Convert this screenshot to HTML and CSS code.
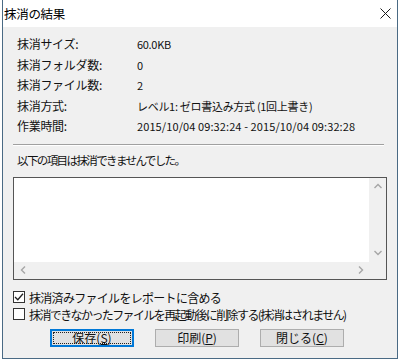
FILE: index.html
```html
<!DOCTYPE html>
<html lang="ja">
<head>
    <meta charset="UTF-8">
    <title>抹消の結果</title>
    <link rel="stylesheet" href="styles.css">
</head>
<body>
    <div class="window">
        <div class="titlebar">
            <span class="title">抹消の結果</span>
            <svg class="close" width="11" height="11" viewBox="0 0 11 11">
                <path d="M0.5 0.5 L10.5 10.5 M10.5 0.5 L0.5 10.5" stroke="#1a1a1a" stroke-width="1" fill="none"/>
            </svg>
        </div>
        <div class="content">
            <div class="info">
                <div class="label">抹消サイズ:</div><div class="value">60.0KB</div>
                <div class="label">抹消フォルダ数:</div><div class="value">0</div>
                <div class="label">抹消ファイル数:</div><div class="value">2</div>
                <div class="label">抹消方式:</div><div class="value">レベル1: ゼロ書込み方式 (1回上書き)</div>
                <div class="label">作業時間:</div><div class="value date">2015/10/04 09:32:24 - 2015/10/04 09:32:28</div>
            </div>
            <div class="separator"></div>
            <div class="message">以下の項目は抹消できませんでした。</div>
            <div class="listbox">
                <div class="list-main">
                    <div class="list-area"></div>
                    <div class="vscroll">
                        <span class="arrow"><svg width="8" height="6" viewBox="0 0 8 6"><path d="M0.5 5 L4 1.5 L7.5 5" stroke="#a6a6a6" stroke-width="1.4" fill="none"/></svg></span>
                        <span class="arrow"><svg width="8" height="6" viewBox="0 0 8 6"><path d="M0.5 1 L4 4.5 L7.5 1" stroke="#a6a6a6" stroke-width="1.4" fill="none"/></svg></span>
                    </div>
                </div>
                <div class="list-bottom">
                    <div class="hscroll">
                        <span class="arrow"><svg width="6" height="8" viewBox="0 0 6 8"><path d="M5 0.5 L1.5 4 L5 7.5" stroke="#a6a6a6" stroke-width="1.4" fill="none"/></svg></span>
                        <span class="arrow"><svg width="6" height="8" viewBox="0 0 6 8"><path d="M1 0.5 L4.5 4 L1 7.5" stroke="#a6a6a6" stroke-width="1.4" fill="none"/></svg></span>
                    </div>
                    <div class="corner"></div>
                </div>
            </div>
            <div class="checks">
                <label class="check">
                    <span class="box">
                        <svg width="10" height="10" viewBox="0 0 10 10"><path d="M1 5 L3.8 7.8 L9 1.8" stroke="#222" stroke-width="1.3" fill="none"/></svg>
                    </span>
                    <span class="check-text">抹消済みファイルをレポートに含める</span>
                </label>
                <label class="check">
                    <span class="box"></span>
                    <span class="check-text long">抹消できなかったファイルを再起動後に削除する(抹消はされません)</span>
                </label>
            </div>
            <div class="buttons">
                <button class="btn default"><span class="focus">保存(<u>S</u>)</span></button>
                <button class="btn">印刷(<u>P</u>)</button>
                <button class="btn">閉じる(<u>C</u>)</button>
            </div>
        </div>
    </div>
</body>
</html>
```

FILE: styles.css
```css
* {
    margin: 0;
    padding: 0;
    box-sizing: border-box;
}
body {
    font-family: "Noto Sans CJK JP", "Liberation Sans", sans-serif;
    font-size: 12px;
    color: #111;
    background-color: #fff;
    width: 400px;
    height: 360px;
    overflow: hidden;
}
.window {
    width: 396px;
    height: 359px;
    margin-left: 2px;
    border: 1px solid #4a6a84;
    border-top: none;
    background-color: #f0f0f0;
}

.titlebar {
    height: 27px;
    background-color: #fff;
    display: flex;
    align-items: center;
    justify-content: space-between;
    padding: 0 6px 0 1px;
}
.title {
    font-size: 12.5px;
    color: #000;
    letter-spacing: -0.3px;
}

.content {
    padding: 7px 0 0 10px;
}
.info {
    display: grid;
    grid-template-columns: 120px 1fr;
    padding-left: 4px;
}
.label, .value {
    height: 20.6px;
    line-height: 20px;
    white-space: nowrap;
    letter-spacing: -0.3px;
}
.value {
    font-size: 11px;
}
.value.date {
    letter-spacing: 0.1px;
}
.separator {
    margin-top: 7px;
    width: 371px;
    border-top: 1px solid #a0a0a0;
    border-bottom: 1px solid #fff;
}
.message {
    height: 31px;
    padding: 4px 0 0 4px;
    line-height: 20px;
    letter-spacing: -1.6px;
    font-size: 11.5px;
}

.listbox {
    width: 374px;
    height: 103px;
    border: 1px solid #555;
    background-color: #fff;
    display: flex;
    flex-direction: column;
}
.list-main {
    flex: 1;
    display: flex;
}
.list-area {
    flex: 1;
}
.vscroll {
    width: 17px;
    background-color: #f0f0f0;
    display: flex;
    flex-direction: column;
    justify-content: space-between;
}
.arrow {
    width: 17px;
    height: 17px;
    display: flex;
    align-items: center;
    justify-content: center;
}
.list-bottom {
    height: 17px;
    display: flex;
}
.hscroll {
    flex: 1;
    background-color: #f0f0f0;
    display: flex;
    justify-content: space-between;
}
.corner {
    width: 17px;
    background-color: #f0f0f0;
}

.checks {
    margin-top: 11px;
    display: flex;
    flex-direction: column;
    gap: 4px;
}
.check {
    display: flex;
    align-items: center;
    gap: 4px;
    height: 13px;
    white-space: nowrap;
}
.box {
    flex-shrink: 0;
    width: 12px;
    height: 12px;
    border: 1px solid #333;
    background-color: #fff;
    display: flex;
    align-items: center;
    justify-content: center;
}
.check-text {
    letter-spacing: -0.7px;
}
.check-text.long {
    letter-spacing: -1.6px;
}

.buttons {
    margin-top: 8px;
    display: flex;
    gap: 21px;
    padding-left: 37px;
}
.btn {
    width: 84px;
    height: 18px;
    border: 1px solid #adadad;
    background-color: #e1e1e1;
    font-family: inherit;
    font-size: 12px;
    color: #111;
    display: flex;
    align-items: center;
    justify-content: center;
}
.btn.default {
    border-color: #0078d7;
    box-shadow: inset 0 0 0 1px #0078d7;
}
.focus {
    display: flex;
    align-items: center;
    justify-content: center;
    width: 78px;
    height: 12px;
    border: 1px dotted #222;
}
```
